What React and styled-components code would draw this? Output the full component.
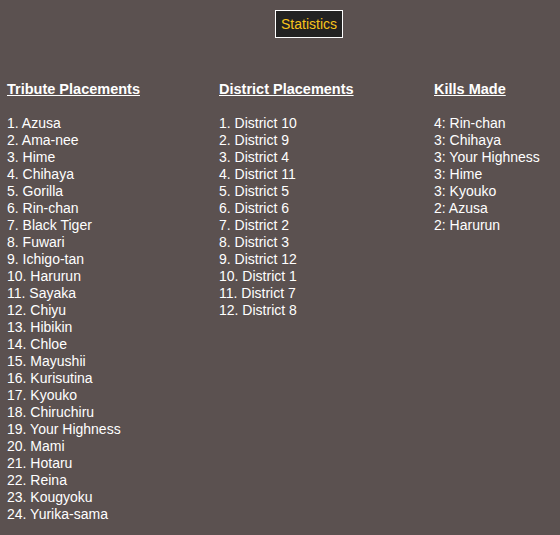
import React from 'react';
import styled, { createGlobalStyle } from 'styled-components';

const GlobalStyle = createGlobalStyle`
  html, body {
    margin: 0;
    padding: 0;
    background: #5b5150;
  }
  body {
    font-family: "Liberation Sans", Arial, sans-serif;
    font-size: 14px;
    color: #ffffff;
  }
`;

const Page = styled.div`
  width: 560px;
  height: 535px;
  overflow: hidden;
  background: #5b5150;
`;

const Header = styled.div`
  display: flex;
  padding: 10px 0 0 275px;
`;

const StatsButton = styled.button`
  width: 68px;
  height: 28px;
  padding: 0;
  background: #222222;
  border: 1px solid #ffffff;
  color: #f7c41c;
  font-family: "Liberation Sans", Arial, sans-serif;
  font-size: 14px;
  cursor: pointer;
`;

const Columns = styled.div`
  display: grid;
  grid-template-columns: 212px 215px 1fr;
  padding: 43px 0 0 7px;
  line-height: 17px;
`;

const Column = styled.div`
  display: flex;
  flex-direction: column;
`;

const Heading = styled.div`
  font-weight: bold;
  font-size: 14.5px;
  text-decoration: underline;
  margin-bottom: 17px;
`;

const Item = styled.div`
  white-space: nowrap;
`;

const tributes = [
  'Azusa', 'Ama-nee', 'Hime', 'Chihaya', 'Gorilla', 'Rin-chan', 'Black Tiger',
  'Fuwari', 'Ichigo-tan', 'Harurun', 'Sayaka', 'Chiyu', 'Hibikin', 'Chloe',
  'Mayushii', 'Kurisutina', 'Kyouko', 'Chiruchiru', 'Your Highness', 'Mami',
  'Hotaru', 'Reina', 'Kougyoku', 'Yurika-sama',
];

const districts = [10, 9, 4, 11, 5, 6, 2, 3, 12, 1, 7, 8];

const kills = [
  [4, 'Rin-chan'], [3, 'Chihaya'], [3, 'Your Highness'], [3, 'Hime'],
  [3, 'Kyouko'], [2, 'Azusa'], [2, 'Harurun'],
];

export default function App() {
  return (
    <Page>
      <GlobalStyle />
      <Header>
        <StatsButton>Statistics</StatsButton>
      </Header>
      <Columns>
        <Column>
          <Heading>Tribute Placements</Heading>
          {tributes.map((name, i) => (
            <Item key={name}>{i + 1}. {name}</Item>
          ))}
        </Column>
        <Column>
          <Heading>District Placements</Heading>
          {districts.map((d, i) => (
            <Item key={d}>{i + 1}. District {d}</Item>
          ))}
        </Column>
        <Column>
          <Heading>Kills Made</Heading>
          {kills.map(([n, name]) => (
            <Item key={name}>{n}: {name}</Item>
          ))}
        </Column>
      </Columns>
    </Page>
  );
}
